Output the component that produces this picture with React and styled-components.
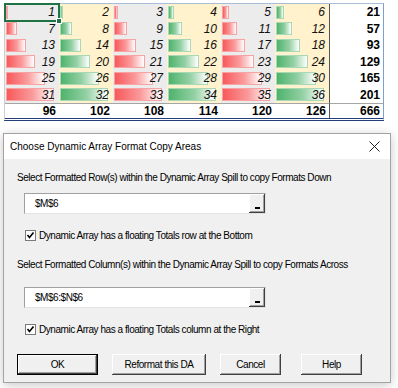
import React from 'react';
import styled, { createGlobalStyle, css } from 'styled-components';

const Global = createGlobalStyle`
  html, body { margin: 0; padding: 0; background: #fff; }
  body { width: 398px; height: 388px; overflow: hidden; font-family: "Liberation Sans", Arial, sans-serif; }
`;

const Page = styled.div`
  display: flex;
  flex-direction: column;
  padding: 3px 0 0 4px;
`;

const Sheet = styled.div`
  display: grid;
  grid-template-columns: repeat(7, 54px);
  grid-template-rows: repeat(6, 16.5px) 15px;
  width: max-content;
  border-top: 1px solid #a9bdd6;
  border-left: 1px solid #cfcfcf;
  border-right: 1px solid #7f9fd0;
  border-bottom: 3px double #23407a;
`;

const Cell = styled.div`
  display: grid;
  align-items: center;
  position: relative;
  background: ${p => (p.$tone === 'red' ? '#ececec' : '#fff2cc')};
  ${p => p.$selected && css`
    z-index: 1;
    outline: 2px solid #217346;
    outline-offset: -1px;
    &::after {
      content: '';
      position: absolute;
      right: -3px;
      bottom: -3px;
      width: 4px;
      height: 4px;
      background: #217346;
      border: 1px solid #fff;
    }
  `}
`;

const Bar = styled.div`
  grid-area: 1 / 1;
  justify-self: start;
  height: 13px;
  box-sizing: border-box;
  margin-left: 1px;
  border: 1px solid ${p => (p.$tone === 'red' ? '#f7a2a3' : '#a8d9b4')};
  background: ${p =>
    p.$tone === 'red'
      ? 'linear-gradient(to right, #f8595b 0%, #fa9a9b 55%, #fff 100%)'
      : 'linear-gradient(to right, #4fb36c 0%, #93d0a4 55%, #fff 100%)'};
`;

const Num = styled.span`
  grid-area: 1 / 1;
  justify-self: end;
  padding-right: 4px;
  font-style: italic;
  font-size: 12px;
  color: #111;
  position: relative;
`;

const TotalCell = styled.div`
  display: flex;
  align-items: center;
  justify-content: flex-end;
  padding-right: 3px;
  background: #fff;
  font-weight: bold;
  font-size: 12px;
  color: #000;
  ${p => p.$sideLine && css`border-left: 1px solid #555;`}
  ${p => p.$topLine && css`border-top: 1px solid #a6a6a6;`}
`;

const Dialog = styled.div`
  margin: 12px 0 0 -1px;
  width: 388px;
  height: 250px;
  box-sizing: border-box;
  border: 1px solid #a3a3a3;
  box-shadow: 0 2px 10px rgba(0, 0, 0, 0.22);
  background: #f0f0f0;
  display: flex;
  flex-direction: column;
`;

const TitleBar = styled.div`
  height: 25px;
  background: #fff;
  display: flex;
  align-items: center;
  justify-content: space-between;
  padding: 0 10px 0 6px;
  font-family: "Liberation Sans", Arial, sans-serif;
  font-size: 10px;
  color: #000;
`;

const Body = styled.div`
  display: flex;
  flex-direction: column;
  align-items: flex-start;
  padding: 0 13px;
  font-family: "Liberation Sans", Arial, sans-serif;
  font-size: 10px;
  letter-spacing: -0.45px;
  color: #000;
`;

const Label = styled.div`
  margin-top: ${p => p.$top}px;
  line-height: 13px;
  white-space: nowrap;
`;

const Field = styled.div`
  margin: ${p => p.$top}px 0 0 7px;
  width: 242px;
  height: 21px;
  box-sizing: border-box;
  background: #fff;
  border: 1px solid;
  border-color: #a0a0a0 #e3e3e3 #e3e3e3 #a0a0a0;
  display: flex;
  align-items: center;
  justify-content: space-between;
`;

const FieldText = styled.span`
  padding-left: 10px;
`;

const PickButton = styled.div`
  width: 16px;
  height: 100%;
  box-sizing: border-box;
  background: #f0f0f0;
  box-shadow: inset -1px -1px #404040, inset 1px 1px #fff, inset -2px -2px #a0a0a0;
  display: flex;
  align-items: flex-end;
  justify-content: center;
  padding-bottom: 4px;
`;

const Dash = styled.span`
  width: 5px;
  height: 2px;
  background: #000;
`;

const CheckRow = styled.div`
  margin: ${p => p.$top}px 0 0 8px;
  display: flex;
  align-items: center;
  gap: 3px;
  line-height: 13px;
  white-space: nowrap;
`;

const Box = styled.span`
  width: 11px;
  height: 11px;
  box-sizing: border-box;
  background: #fff;
  border: 1px solid #7a7a7a;
  display: flex;
  align-items: center;
  justify-content: center;
`;

const ButtonRow = styled.div`
  margin-top: ${p => p.$top}px;
  display: flex;
  align-items: center;
`;

const Button = styled.div`
  width: ${p => p.$w}px;
  height: 21px;
  margin-left: ${p => p.$gap}px;
  box-sizing: border-box;
  display: flex;
  align-items: center;
  justify-content: center;
  background: #f0f0f0;
  box-shadow: inset -1px -1px #404040, inset 1px 1px #fff, inset -2px -2px #a0a0a0;
  ${p => p.$default && css`
    border: 1px solid #000;
  `}
`;

const CloseIcon = () => (
  <svg width="11" height="11" viewBox="0 0 11 11">
    <path d="M0.5 0.5 L10.5 10.5 M10.5 0.5 L0.5 10.5" stroke="#222" strokeWidth="1" fill="none" />
  </svg>
);

const Check = () => (
  <svg width="9" height="9" viewBox="0 0 9 9">
    <path d="M1.5 4 L3.5 6.5 L7.5 1.5" stroke="#000" strokeWidth="1.6" fill="none" />
  </svg>
);

const cols = [0, 1, 2, 3, 4, 5];
const rows = [0, 1, 2, 3, 4, 5];

export default function App() {
  const cells = [];
  rows.forEach(r => {
    let rowSum = 0;
    cols.forEach(c => {
      const v = r * 6 + c + 1;
      rowSum += v;
      const max = 30 + c + 1;
      const tone = c % 2 === 0 ? 'red' : 'green';
      const w = Math.max(2, (v / max) * 48);
      cells.push(
        <Cell key={`${r}-${c}`} $tone={tone} $selected={r === 0 && c === 0}>
          <Bar $tone={tone} style={{ width: `${w}px` }} />
          <Num>{v}</Num>
        </Cell>
      );
    });
    cells.push(
      <TotalCell key={`t-${r}`} $sideLine>
        {rowSum}
      </TotalCell>
    );
  });
  let grand = 0;
  cols.forEach(c => {
    const s = rows.reduce((a, r) => a + r * 6 + c + 1, 0);
    grand += s;
    cells.push(
      <TotalCell key={`c-${c}`} $topLine>
        {s}
      </TotalCell>
    );
  });
  cells.push(
    <TotalCell key="grand" $topLine $sideLine>
      {grand}
    </TotalCell>
  );

  return (
    <>
      <Global />
      <Page>
        <Sheet>{cells}</Sheet>
        <Dialog>
          <TitleBar>
            <span>Choose Dynamic Array Format Copy Areas</span>
            <CloseIcon />
          </TitleBar>
          <Body>
            <Label $top={12}>Select Formatted Row(s) within the Dynamic Array Spill to copy Formats Down</Label>
            <Field $top={9}>
              <FieldText>$M$6</FieldText>
              <PickButton><Dash /></PickButton>
            </Field>
            <CheckRow $top={15}>
              <Box><Check /></Box>
              <span>Dynamic Array has a floating Totals row at the Bottom</span>
            </CheckRow>
            <Label $top={16}>Select Formatted Column(s) within the Dynamic Array Spill to copy Formats Across</Label>
            <Field $top={16}>
              <FieldText>$M$6:$N$6</FieldText>
              <PickButton><Dash /></PickButton>
            </Field>
            <CheckRow $top={15}>
              <Box><Check /></Box>
              <span>Dynamic Array has a floating Totals column at the Right</span>
            </CheckRow>
            <ButtonRow $top={18}>
              <Button $w={81} $gap={0} $default>OK</Button>
              <Button $w={94} $gap={14}>Reformat this DA</Button>
              <Button $w={61} $gap={14}>Cancel</Button>
              <Button $w={61} $gap={20}>Help</Button>
            </ButtonRow>
          </Body>
        </Dialog>
      </Page>
    </>
  );
}
